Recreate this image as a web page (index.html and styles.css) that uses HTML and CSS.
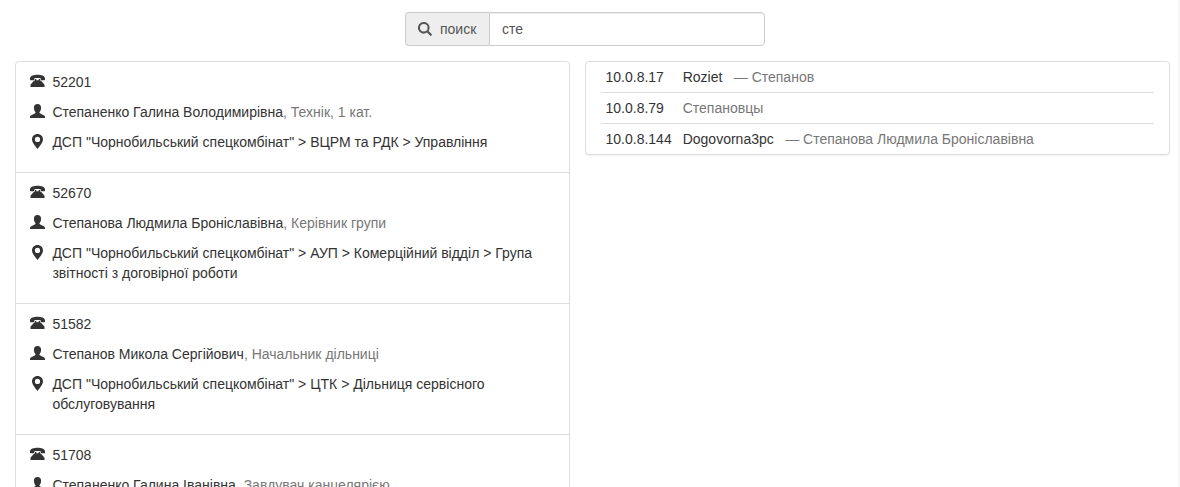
FILE: index.html
```html
<!DOCTYPE html>
<html lang="en">

<head>
    <meta charset="UTF-8">
    <title>Телефонный справочник</title>
    <link rel="stylesheet" href="styles.css">
</head>

<body>
    <svg class="sprites" width="0" height="0">
        <symbol id="i-phone" viewBox="0 0 16 16">
            <path d="M0 4.700C0 1.700 4 .8 7.500 .8S15 1.700 15 4.700v1c0 .3-.2.5-.5.5h-3.300c-.3 0-.5-.2-.5-.5V4.300c-1-.3-2-.4-3.200-.4s-2.200.1-3.200.4v1.400c0 .3-.2.5-.5.5H.5c-.3 0-.5-.2-.5-.5z"/>
            <path d="M5 5h1.300v1.300h2.400V5H10v.8c0 .7.5 1.200 1.200 1.200l3 3.200c.2.300.3.500.3.800V13H.5v-2c0-.3.1-.5.3-.8l3-3.200C4.500 7 5 6.500 5 5.800z"/>
        </symbol>
        <symbol id="i-user" viewBox="0 0 16 16">
            <path d="M7.500 0c2.300 0 3.600 1.600 3.600 3.800 0 1.700-.7 3.300-1.500 4.200-.3.400-.2 1 .2 1.300l3.900 1.900c.8.400 1.300 1 1.300 1.800v1H0v-1c0-.8.500-1.400 1.300-1.800l3.900-1.900c.4-.3.500-.9.200-1.300C4.600 7.100 3.900 5.500 3.900 3.800 3.900 1.600 5.200 0 7.500 0z"/>
        </symbol>
        <symbol id="i-pin" viewBox="0 0 16 16">
            <path fill-rule="evenodd" d="M7.500 0C10.500 0 13 2.300 13 5.300 13 8.800 9.200 12.800 7.500 15 5.800 12.800 2 8.800 2 5.300 2 2.300 4.500 0 7.500 0zm0 2.800a2.600 2.600 0 1 0 0 5.200 2.600 2.600 0 0 0 0-5.200z"/>
        </symbol>
        <symbol id="i-search" viewBox="0 0 14 14">
            <path fill-rule="evenodd" d="M5.800 0a5.800 5.800 0 0 1 4.800 9l3 3c.4.400.4 1 0 1.400l-.2.200c-.4.400-1 .4-1.400 0l-3-3A5.800 5.800 0 1 1 5.800 0zm0 2a3.800 3.800 0 1 0 0 7.600 3.800 3.800 0 0 0 0-7.600z"/>
        </symbol>
    </svg>

    <div class="search-bar">
        <div class="search-group">
            <span class="search-label"><svg class="icon icon-search"><use href="#i-search"/></svg>поиск</span>
            <input class="search-input" type="text" value="сте">
        </div>
    </div>

    <div class="columns">
        <div class="panel people">
            <div class="person">
                <p class="line"><svg class="icon"><use href="#i-phone"/></svg><span>52201</span></p>
                <p class="line"><svg class="icon"><use href="#i-user"/></svg><span>Степаненко Галина Володимирівна<span class="muted">, Технік, 1 кат.</span></span></p>
                <p class="line"><svg class="icon"><use href="#i-pin"/></svg><span>ДСП "Чорнобильський спецкомбінат" &gt; ВЦРМ та РДК &gt; Управління</span></p>
            </div>
            <div class="person">
                <p class="line"><svg class="icon"><use href="#i-phone"/></svg><span>52670</span></p>
                <p class="line"><svg class="icon"><use href="#i-user"/></svg><span>Степанова Людмила Броніславівна<span class="muted">, Керівник групи</span></span></p>
                <p class="line"><svg class="icon"><use href="#i-pin"/></svg><span>ДСП "Чорнобильський спецкомбінат" &gt; АУП &gt; Комерційний відділ &gt; Група звітності з договірної роботи</span></p>
            </div>
            <div class="person">
                <p class="line"><svg class="icon"><use href="#i-phone"/></svg><span>51582</span></p>
                <p class="line"><svg class="icon"><use href="#i-user"/></svg><span>Степанов Микола Сергійович<span class="muted">, Начальник дільниці</span></span></p>
                <p class="line"><svg class="icon"><use href="#i-pin"/></svg><span>ДСП "Чорнобильський спецкомбінат" &gt; ЦТК &gt; Дільниця сервісного обслуговування</span></p>
            </div>
            <div class="person">
                <p class="line"><svg class="icon"><use href="#i-phone"/></svg><span>51708</span></p>
                <p class="line"><svg class="icon"><use href="#i-user"/></svg><span>Степаненко Галина Іванівна<span class="muted">, Завдувач канцелярією</span></span></p>
            </div>
        </div>

        <div class="panel hosts">
            <table class="host-table">
                <tr>
                    <td class="ip">10.0.8.17</td>
                    <td>Roziet <span class="muted note">— Степанов</span></td>
                </tr>
                <tr>
                    <td class="ip">10.0.8.79</td>
                    <td><span class="muted">Степановцы</span></td>
                </tr>
                <tr>
                    <td class="ip">10.0.8.144</td>
                    <td>Dogovorna3pc <span class="muted note">— Степанова Людмила Броніславівна</span></td>
                </tr>
            </table>
        </div>
    </div>
</body>

</html>
```

FILE: styles.css
```css
* {
    box-sizing: border-box;
}

html,
body {
    height: 100%;
    overflow: hidden;
}

html {
    background-color: #f6f6f6;
}

body {
    width: 1178px;
    margin: 0;
    background-color: #fff;
    color: #333;
    font-family: "Liberation Sans", Arial, sans-serif;
    font-size: 14px;
    line-height: 20px;
}

.sprites {
    display: block;
}

.search-bar {
    display: flex;
    justify-content: center;
    padding-top: 12px;
    padding-right: 8px;
    margin-bottom: 15px;
}

.search-group {
    display: flex;
    width: 360px;
    height: 34px;
}

.search-label {
    display: flex;
    align-items: center;
    flex: none;
    width: 84px;
    padding-left: 12px;
    background-color: #eee;
    border: 1px solid #ccc;
    border-right: 0;
    border-radius: 4px 0 0 4px;
    color: #555;
}

.search-input {
    flex: 1;
    min-width: 0;
    padding: 6px 12px;
    border: 1px solid #ccc;
    border-radius: 0 4px 4px 0;
    box-shadow: inset 0 1px 1px rgba(0, 0, 0, .075);
    color: #555;
    font: inherit;
}

.icon {
    flex: none;
    width: 16px;
    height: 16px;
    margin-top: 2px;
    margin-right: 6.4px;
    fill: #333;
}

.icon-search {
    width: 14px;
    height: 14px;
    margin-top: 0;
    margin-right: 8px;
    fill: #555;
}

.columns {
    display: grid;
    grid-template-columns: 555px 585px;
    gap: 15px;
    align-items: start;
    padding-left: 15px;
}

.panel {
    background-color: #fff;
    border: 1px solid #ddd;
    border-radius: 4px;
    box-shadow: 0 1px 1px rgba(0, 0, 0, .05);
}

.person {
    padding: 10px 14px;
    border-bottom: 1px solid #ddd;
}

.person:last-child {
    border-bottom: 0;
}

.line {
    display: flex;
    margin: 0 0 10px;
}

.muted {
    color: #777;
}

.note {
    margin-left: 7.5px;
}

.hosts {
    padding: 0 15px;
}

.host-table {
    width: 100%;
    border-collapse: collapse;
}

.host-table td {
    padding: 5px;
    border-top: 1px solid #ddd;
}

.host-table tr:first-child td {
    border-top: 0;
}

.host-table .ip {
    width: 1%;
    padding-left: 4.5px;
    padding-right: 6px;
    white-space: nowrap;
}
```
